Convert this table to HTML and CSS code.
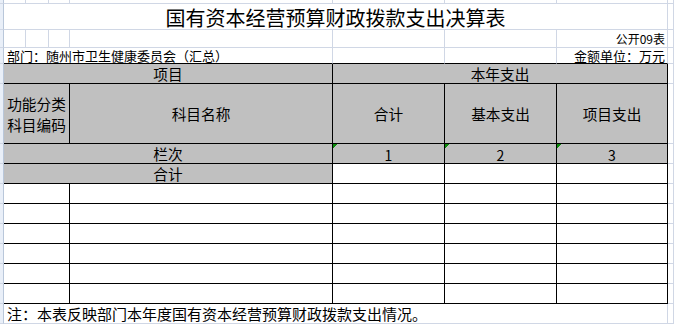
FILE: index.html
```html
<!DOCTYPE html>
<html lang="zh-CN">
<head>
<meta charset="utf-8">
<title>国有资本经营预算财政拨款支出决算表</title>
<link rel="stylesheet" href="styles.css">
</head>
<body>
<div class="sheet">
  <!-- row 0 -->
  <div class="c s"></div><div class="c"></div><div class="c"></div><div class="c"></div><div class="c"></div><div class="c"></div><div class="c"></div><div class="c"></div><div class="c"></div>
  <!-- title -->
  <div class="c s"></div><div class="c span7 title">国有资本经营预算财政拨款支出决算表</div><div class="c"></div>
  <!-- 公开09表 -->
  <div class="c s"></div><div class="c"></div><div class="c"></div><div class="c"></div><div class="c"></div><div class="c"></div><div class="c"></div><div class="c code right">公开09表</div><div class="c"></div>
  <!-- 部门 -->
  <div class="c s"></div><div class="c span4 small left tb">部门：随州市卫生健康委员会（汇总）</div><div class="c tb"></div><div class="c tb"></div><div class="c small right tb">金额单位：万元</div><div class="c"></div>
  <!-- 项目 / 本年支出 -->
  <div class="c s"></div><div class="c t g span4">项目</div><div class="c t g span3">本年支出</div><div class="c"></div>
  <!-- header -->
  <div class="c s"></div><div class="c t g span3 two">功能分类<br>科目编码</div><div class="c t g">科目名称</div><div class="c t g">合计</div><div class="c t g">基本支出</div><div class="c t g">项目支出</div><div class="c"></div>
  <!-- 栏次 -->
  <div class="c s"></div><div class="c t g span4">栏次</div><div class="c t g num tri">1</div><div class="c t g num tri">2</div><div class="c t g num tri">3</div><div class="c"></div>
  <!-- 合计 -->
  <div class="c s"></div><div class="c t g span4">合计</div><div class="c t"></div><div class="c t"></div><div class="c t"></div><div class="c"></div>
  <!-- data rows -->
  <div class="c s"></div><div class="c t span3"></div><div class="c t"></div><div class="c t"></div><div class="c t"></div><div class="c t"></div><div class="c"></div>
  <div class="c s"></div><div class="c t span3"></div><div class="c t"></div><div class="c t"></div><div class="c t"></div><div class="c t"></div><div class="c"></div>
  <div class="c s"></div><div class="c t span3"></div><div class="c t"></div><div class="c t"></div><div class="c t"></div><div class="c t"></div><div class="c"></div>
  <div class="c s"></div><div class="c t span3"></div><div class="c t"></div><div class="c t"></div><div class="c t"></div><div class="c t"></div><div class="c"></div>
  <div class="c s"></div><div class="c t span3"></div><div class="c t"></div><div class="c t"></div><div class="c t"></div><div class="c t"></div><div class="c"></div>
  <div class="c s"></div><div class="c t span3"></div><div class="c t"></div><div class="c t"></div><div class="c t"></div><div class="c t"></div><div class="c"></div>
  <!-- note -->
  <div class="c s"></div><div class="c span7 note left">注：本表反映部门本年度国有资本经营预算财政拨款支出情况。</div><div class="c"></div>
</div>
</body>
</html>
```

FILE: styles.css
```css
html, body {
  margin: 0;
  padding: 0;
  background: #ffffff;
}

.sheet {
  display: grid;
  grid-template-columns: 4px 22px 23px 21px 263px 112px 112px 111px 6px;
  grid-template-rows: 4px 26px 18px 16px 20px 60px repeat(8, 20px) 20px;
  width: 674px;
  height: 324px;
  overflow: hidden;
  font-family: "Noto Sans CJK SC", "Noto Sans", sans-serif;
  color: #000;
}

.c {
  box-sizing: border-box;
  border-right: 1px solid #d0d7e5;
  border-bottom: 1px solid #d0d7e5;
  display: flex;
  align-items: center;
  justify-content: center;
  font-size: 14.67px;
  line-height: 18px;
  white-space: nowrap;
  min-width: 0;
}

.s {
  background: #e9eff8;
  border-right-color: #b9c7da;
}

.span3 { grid-column: span 3; }
.span4 { grid-column: span 4; }
.span7 { grid-column: span 7; }

.title {
  font-size: 20px;
  line-height: 22px;
  padding-top: 3px;
}

.small {
  font-size: 13px;
  line-height: 14px;
}

.code {
  font-size: 12px;
  line-height: 13px;
  padding-bottom: 1px;
}

.right {
  justify-content: flex-end;
  padding-right: 2px;
}

.left {
  justify-content: flex-start;
  padding-left: 3px;
}

.tb {
  border-bottom-color: #000;
}

.t {
  border-right-color: #000;
  border-bottom-color: #000;
}

.g {
  background-color: #c0c0c0;
}

.two {
  white-space: normal;
  text-align: center;
  line-height: 21px;
}

.num {
  font-size: 14px;
  padding-top: 2px;
}

.tri {
  background: linear-gradient(135deg, #0a8a0a 0, #0a8a0a 3px, transparent 3px) no-repeat 0 0 / 6px 6px, #c0c0c0;
}

.note {
  font-size: 15px;
}
```
